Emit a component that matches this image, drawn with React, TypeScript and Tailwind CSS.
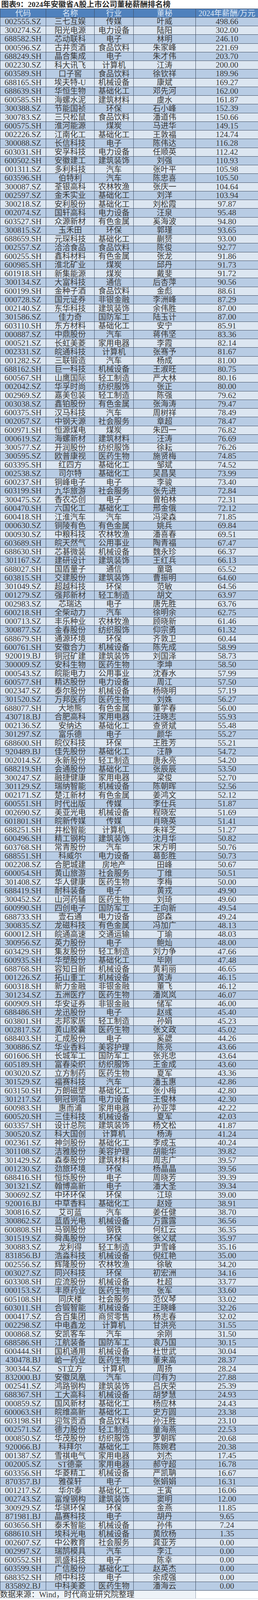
import React from "react";

// code,name,industry,secretary,salary
const DATA = `002555.SZ,三七互娱,传媒,叶威,498.66
300274.SZ,阳光电源,电力设备,陆阳,302.00
688582.SH,芯动联科,电子,林明,246.10
000596.SZ,古井贡酒,食品饮料,朱家峰,221.69
688249.SH,晶合集成,电子,朱才伟,203.70
002230.SZ,科大讯飞,计算机,江涛,200.00
603589.SH,口子窖,食品饮料,徐钦祥,189.96
688165.SH,埃夫特-U,机械设备,康斌,169.27
688639.SH,华恒生物,基础化工,邓先河,162.00
600585.SH,海螺水泥,建筑材料,虞水,161.87
300388.SZ,节能国祯,环保,石小峰,152.39
300783.SZ,三只松鼠,食品饮料,潘道伟,150.66
600575.SH,淮河能源,煤炭,马进华,149.15
002226.SZ,江南化工,基础化工,王敦福,124.74
300088.SZ,长信科技,电子,陈伟达,116.28
603031.SH,安孚科技,电力设备,任顺英,112.42
600502.SH,安徽建工,建筑装饰,刘强,110.93
001311.SZ,多利科技,汽车,张叶平,105.98
603596.SH,伯特利,汽车,陈忠喜,105.50
300087.SZ,荃银高科,农林牧渔,张庆一,104.64
002597.SZ,金禾实业,基础化工,刘洋,103.94
300218.SZ,安利股份,基础化工,刘松霞,97.87
002074.SZ,国轩高科,电力设备,汪泉,95.48
603527.SH,众源新材,有色金属,奚海波,94.80
300815.SZ,玉禾田,环保,郭瑾,93.65
688659.SH,元琛科技,基础化工,蒯赟,93.00
002557.SZ,洽洽食品,食品饮料,陈俊,92.77
600255.SH,鑫科材料,有色金属,张龙,91.86
600985.SH,淮北矿业,煤炭,邱丹,91.73
601918.SH,新集能源,煤炭,戴斐,91.72
300134.SZ,大富科技,通信,后杏萍,90.56
600199.SH,金种子酒,食品饮料,金彪,88.61
000728.SZ,国元证券,非银金融,李洲峰,87.29
002140.SZ,东华科技,建筑装饰,余伟胜,87.00
301586.SZ,佳力奇,国防军工,陆玉计,87.00
603110.SH,东方材料,基础化工,安宁,85.91
000887.SZ,中鼎股份,汽车,蒋伟坚,83.36
000521.SZ,长虹美菱,家用电器,李霞,82.14
002331.SZ,皖通科技,计算机,张骞予,81.67
001282.SZ,三联锻造,汽车,杨成,81.00
688162.SH,巨一科技,机械设备,王淑旺,80.75
600567.SH,山鹰国际,轻工制造,严大林,80.16
002042.SZ,华孚时尚,纺织服饰,张正,80.00
002969.SZ,嘉美包装,轻工制造,陈强,79.62
003038.SZ,鑫铂股份,有色金属,张海涛,79.47
600375.SH,汉马科技,汽车,周树祥,78.49
002057.SZ,中钢天源,社会服务,章超,78.47
600971.SH,恒源煤电,煤炭,朱四一,76.82
000619.SZ,海螺新材,建筑材料,汪涛,76.69
300577.SZ,开润股份,纺织服饰,徐耘,76.26
300595.SZ,欧普康视,医药生物,施贤梅,74.85
603395.SH,红四方,基础化工,邹斌,74.52
002538.SZ,司尔特,基础化工,吴昌昊,73.99
600237.SH,铜峰电子,电子,李骏,73.40
603199.SH,九华旅游,社会服务,张先进,72.84
300475.SZ,香农芯创,电子,曾柏林,72.31
600470.SH,六国化工,基础化工,邢金俄,72.12
600418.SH,江淮汽车,汽车,冯梁森,71.85
000630.SZ,铜陵有色,有色金属,姚兵,69.84
000930.SZ,中粮科技,农林牧渔,潘喜春,69.51
603689.SH,皖天然气,公用事业,陶青福,67.47
688630.SH,芯碁微装,机械设备,魏永珍,66.37
301167.SZ,建研设计,建筑装饰,王红兵,66.13
688027.SH,国盾量子,通信,童璐,65.52
603815.SH,交建股份,建筑装饰,曹振明,64.60
301049.SZ,超越科技,环保,范敏,64.56
001279.SZ,强邦新材,轻工制造,胡文,63.97
002983.SZ,芯瑞达,电子,唐先胜,63.76
600218.SH,全柴动力,汽车,徐明余,62.75
000713.SZ,丰乐种业,农林牧渔,顾晓新,61.46
300877.SZ,金春股份,纺织服饰,仰宗勇,61.32
688679.SH,通源环境,环保,齐敦卫,60.44
600761.SH,安徽合力,机械设备,陈先成,58.99
920019.BJ,铜冠矿建,建筑装饰,刘国泽,58.73
300009.SZ,安科生物,医药生物,李坤,58.50
000543.SZ,皖能电力,公用事业,沈春水,57.99
600577.SH,精达股份,电力设备,周江,57.50
002347.SZ,泰尔股份,机械设备,杨晓明,57.19
301520.SZ,万邦医药,医药生物,刘姝,56.27
688077.SH,大地熊,有色金属,董学春,56.00
430718.BJ,合肥高科,家用电器,汪晓志,55.93
002136.SZ,安纳达,基础化工,查贤斌,55.48
301297.SZ,富乐德,电子,颜华,55.27
688600.SH,皖仪科技,环保,王胜芳,55.21
920489.BJ,佳先股份,基础化工,汪静,54.72
002014.SZ,永新股份,轻工制造,唐永亮,54.20
688219.SH,会通股份,基础化工,张辰辰,53.50
300247.SZ,融捷健康,家用电器,梁俊,52.70
301129.SZ,瑞纳智能,机械设备,陈朝晖,52.56
002171.SZ,楚江新材,有色金属,姜鸿文,52.12
600551.SH,时代出版,传媒,李仕兵,51.87
002690.SZ,美亚光电,机械设备,程晓宏,51.69
601801.SH,皖新传媒,传媒,肖晓英,51.41
688251.SH,井松智能,计算机,朱祥芝,51.27
600496.SH,精工钢构,建筑装饰,沈月华,50.82
603768.SH,常青股份,汽车,宋方明,50.76
688551.SH,科威尔,电力设备,葛彭胜,50.73
002208.SZ,合肥城建,房地产,田峰,50.67
600054.SH,黄山旅游,社会服务,丁维,50.51
301408.SZ,华人健康,医药生物,李梅,50.00
688419.SH,耐科装备,电子,黄戎,49.90
300452.SZ,山河药辅,医药生物,刘琦,49.60
600990.SH,四创电子,国防军工,王向新,49.54
688733.SH,壹石通,电力设备,邵森,49.24
300835.SZ,龙磁科技,有色金属,冯加广,48.13
600012.SH,皖通高速,交通运输,丁瑜,48.03
300956.SZ,英力股份,电子,鲍灿,48.00
603429.SH,集友股份,轻工制造,刘力争,47.66
600935.SH,华塑股份,基础化工,毕刚,47.48
688768.SH,容知日新,机械设备,黄莉丽,46.65
001226.SZ,拓山重工,机械设备,黄涛,46.15
600318.SH,新力金融,非银金融,董飞,46.12
301234.SZ,五洲医疗,医药生物,潘岚岚,46.07
600909.SH,华安证券,非银金融,储军,46.00
688486.SH,龙迅股份,电子,赵彧,45.40
603801.SH,志邦家居,轻工制造,孙娟,45.23
002817.SZ,黄山胶囊,医药生物,张文政,45.02
688403.SH,汇成股份,电子,奚勰,44.26
300886.SZ,华业香料,美容护理,陈亮,43.66
601606.SH,长城军工,国防军工,张兆忠,43.64
605189.SH,富春染织,纺织服饰,王金成,43.60
003020.SZ,立方制药,医药生物,夏军,43.36
301529.SZ,福赛科技,汽车,潘玉惠,42.86
603150.SH,万朗磁塑,基础化工,张小梅,42.80
301217.SZ,铜冠铜箔,电力设备,王俊林,42.30
600983.SH,惠而浦,家用电器,孙亚萍,42.22
600520.SH,三佳科技,机械设备,夏军,42.03
603357.SH,设计总院,建筑装饰,杨文松,41.87
300520.SZ,科大国创,计算机,杨涛,41.24
002361.SZ,神剑股份,基础化工,李成玉,40.24
301108.SZ,洁雅股份,美容护理,胡能华,39.82
301429.SZ,森泰股份,建筑材料,周志广,39.57
001230.SZ,劲旅环境,环保,杨晶晶,39.56
688416.SH,恒烁股份,电子,周晓芳,39.39
301321.SZ,翰博高新,电子,潘大圣,39.34
300692.SZ,中环环保,环保,江琼,39.00
920016.BJ,中草香料,基础化工,赵娅,38.91
300816.SZ,艾可蓝,汽车,姜任健,38.70
300862.SZ,蓝盾光电,机械设备,万露露,36.56
600808.SH,马钢股份,钢铁,何红云,36.35
301519.SZ,舜禹股份,环保,张义斌,35.97
300883.SZ,龙利得,轻工制造,尹雪峰,35.16
831856.BJ,浩淼科技,机械设备,倪红艳,35.00
002556.SZ,辉隆股份,农林牧渔,徐敏,34.20
003027.SZ,同兴科技,环保,初宏洲,34.16
603308.SH,应流股份,机械设备,杜超,33.77
000153.SZ,丰原药业,医药生物,张军,33.60
605108.SH,同庆楼,社会服务,范仪琴,33.02
603011.SH,合锻智能,机械设备,王晓峰,32.26
000417.SZ,合百集团,商贸零售,杨志春,32.02
002298.SZ,中电鑫龙,计算机,甘洪亮,31.55
000868.SZ,安凯客车,汽车,余刚,31.50
688586.SH,江航装备,国防军工,袁乃国,30.15
600444.SH,国机通用,机械设备,杜世武,30.04
430478.BJ,峆一药业,医药生物,董来高,28.37
300344.SZ,ST立方,计算机,周扬,28.24
832000.BJ,安徽凤凰,汽车,闫有为,27.88
002541.SZ,鸿路钢构,建筑装饰,吕庆荣,25.39
688367.SH,工大高科,机械设备,胡梦慧,24.93
000859.SZ,国风新材,基础化工,杨应林,24.43
600063.SH,皖维高新,基础化工,史方圆,23.38
603198.SH,迎驾贡酒,食品饮料,孙汪胜,23.10
002571.SZ,德力股份,轻工制造,童海燕,22.53
000850.SZ,华茂股份,纺织服饰,罗朝晖,20.68
920066.BJ,科拜尔,基础化工,陈婉君,20.38
001387.SZ,雪祺电气,家用电器,刘杰,17.45
002005.SZ,ST德豪,家用电器,郝守超,16.78
603356.SH,华菱精工,机械设备,严凯聃,16.67
870357.BJ,雅葆轩,电子,张娟娟,16.31
001217.SZ,华尔泰,基础化工,王寅,16.06
002743.SZ,富煌钢构,建筑装饰,窦明,12.00
300929.SZ,华骐环保,环保,金燕,11.85
871981.BJ,晶赛科技,电子,胡丹,9.65
603656.SH,泰禾智能,机械设备,孙伟,7.24
688610.SH,埃科光电,机械设备,黄欣杨,1.35
002607.SZ,中公教育,社会服务,龚亚芳,0.00
002997.SZ,瑞鹄模具,汽车,李江,0.00
600552.SH,凯盛科技,电子,陈幸,0.00
603599.SH,广信股份,基础化工,赵英杰,0.00
688352.SH,颀中科技,电子,余成强,0.00
835892.BJ,中科美菱,医药生物,潘海云,0.00`;

const rows = DATA.split("\n").map((line) => line.split(","));

// the window really opens 4096px tall, so the 5366px picture is laid out at 4096/5366 vertically
const gridCols = "grid grid-cols-[117px_124px_100px_159px_1fr]";
const cell = "flex items-center justify-center border-r border-[#3e4c62] whitespace-nowrap";
const lastCell = "flex items-center justify-center whitespace-nowrap";

export default function App() {
  return (
    <div className="w-full bg-white font-['Liberation_Serif','Noto_Sans_CJK_SC',serif] text-[#3a3a3a]">
      {/* ── Titre ─────────────────────── */}
      <div className="flex h-[22.37px] items-center pl-[3px] pt-[2px] text-[19.5px] font-bold leading-none text-[#2a2a2a] whitespace-nowrap">
        图表9：2024年安徽省A股上市公司董秘薪酬排名榜
      </div>

      <div className="border-l border-[#3e4c62]">
        {/* ── En-tête ─────────────────────── */}
        <div
          className={`${gridCols} h-[22.44px] border-y border-[#3e4c62] bg-[#4f81bd] text-[20px] leading-none text-[#dbe6f4]`}
        >
          <div className={cell}>代码</div>
          <div className={cell}>名称</div>
          <div className={cell}>行业</div>
          <div className={cell}>董秘</div>
          <div className={lastCell}>2024年薪酬/万元</div>
        </div>

        {/* ── Lignes ─────────────────────── */}
        {rows.map(([code, name, industry, secretary, salary], i) => (
          <div
            key={code + i}
            className={`${gridCols} h-[22.258px] border-b border-[#3e4c62] leading-none ${
              i % 2 === 0 ? "bg-[#b8cce4]" : "bg-[#dce6f1]"
            }`}
          >
            <div className={`${cell} text-[21px]`}>{code}</div>
            <div className={`${cell} text-[20px]`}>{name}</div>
            <div className={`${cell} text-[20px]`}>{industry}</div>
            <div className={`${cell} text-[20px]`}>{secretary}</div>
            <div className={`${lastCell} text-[21px]`}>{salary}</div>
          </div>
        ))}
      </div>

      {/* ── Source ─────────────────────── */}
      <div className="grid h-[21.4px] grid-cols-[500px_1fr] border-b border-[#c9d3df]">
        <div className="flex items-center bg-[#eef3f8] text-[20px] leading-none whitespace-nowrap">
          数据来源：Wind，时代商业研究院整理
        </div>
        <div className="border-l border-[#8a96a8] bg-white" />
      </div>
    </div>
  );
}
